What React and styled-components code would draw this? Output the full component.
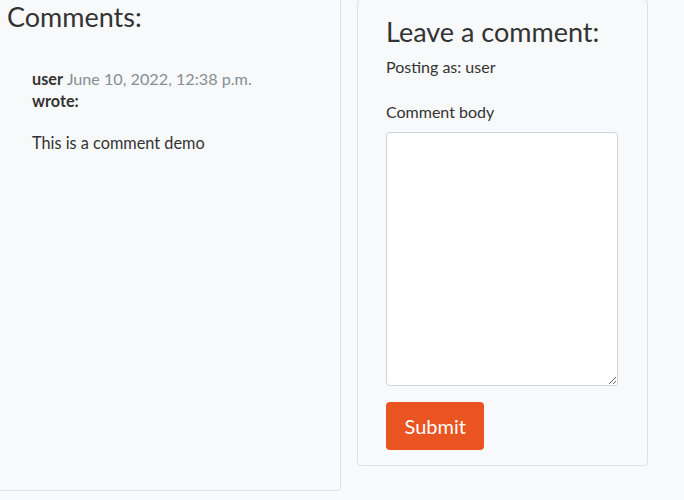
import React from "react";
import styled, { createGlobalStyle } from "styled-components";

const Global = createGlobalStyle`
  html, body { margin: 0; padding: 0; background: #f8f9fa; }
  body {
    font-family: Lato, "Noto Sans", sans-serif;
    color: #333333;
    font-size: 16px;
    line-height: 1.5;
    overflow: hidden;
  }
`;

const Row = styled.div`
  display: flex;
  align-items: flex-start;
  gap: 16px;
  margin-left: -10px;
  width: 700px;
`;

const Card = styled.section`
  box-sizing: border-box;
  background: #f8f9fa;
  border: 1px solid #dfe1e4;
  border-radius: 4px;
  width: ${(p) => p.$w}px;
  height: ${(p) => p.$h}px;
  margin-top: ${(p) => p.$top || 0}px;
`;

const CommentsBody = styled.div`
  padding: 9px 16px 0 16px;
`;

const Heading = styled.h3`
  margin: 0;
  font-size: 27px;
  font-weight: 400;
  line-height: 1.2;
  color: #333333;
`;

const CommentItem = styled.div`
  padding: 35px 25px 0 25px;
`;

const Meta = styled.p`
  margin: 0;
  line-height: 22px;
  font-size: 16.2px;
`;

const Author = styled.strong`
  font-weight: 700;
`;

const DateText = styled.span`
  color: #868e96;
`;

const Body = styled.p`
  margin: 19px 0 0;
  font-size: 16.3px;
`;

const FormBody = styled.div`
  padding: 16px 28px 16px;
`;

const Small = styled.p`
  margin: 7px 0 0;
`;

const Label = styled.label`
  display: block;
  margin: 21px 0 8px;
`;

const TextArea = styled.textarea`
  display: block;
  box-sizing: border-box;
  width: 232px;
  height: 254px;
  border: 1px solid #ced4da;
  border-radius: 4px;
  background: #ffffff;
  resize: vertical;
  font: inherit;
  margin: 0;
`;

const Button = styled.button`
  margin-top: 16px;
  background: #e95420;
  color: #ffffff;
  border: 0;
  border-radius: 4px;
  font-family: inherit;
  font-size: 20px;
  padding: 0 18.5px;
  height: 48px;
  line-height: 48px;
  cursor: pointer;
`;

export default function App() {
  return (
    <>
      <Global />
      <Row>
        <Card $w={351} $h={500} $top={-9}>
          <CommentsBody>
            <Heading>Comments:</Heading>
            <CommentItem>
              <Meta>
                <Author>user</Author> <DateText>June 10, 2022, 12:38 p.m.</DateText>
              </Meta>
              <Meta>
                <Author>wrote:</Author>
              </Meta>
              <Body>This is a comment demo</Body>
            </CommentItem>
          </CommentsBody>
        </Card>
        <Card $w={291} $h={467} $top={-1}>
          <FormBody>
            <Heading>Leave a comment:</Heading>
            <Small>Posting as: user</Small>
            <form onSubmit={(e) => e.preventDefault()}>
              <Label htmlFor="body">Comment body</Label>
              <TextArea id="body" />
              <Button type="submit">Submit</Button>
            </form>
          </FormBody>
        </Card>
      </Row>
    </>
  );
}
